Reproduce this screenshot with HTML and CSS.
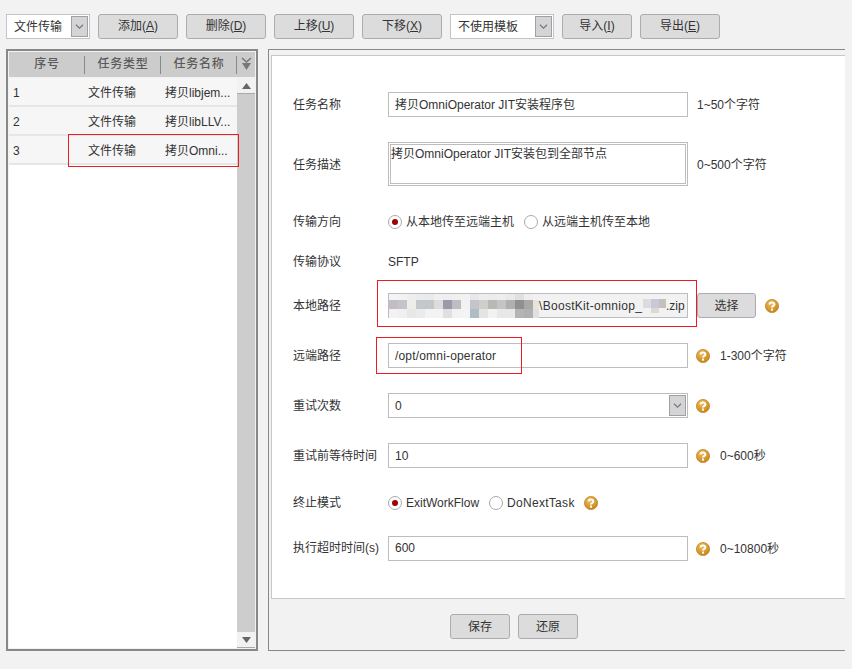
FILE: index.html
```html
<!DOCTYPE html>
<html lang="zh-CN">
<head>
<meta charset="utf-8">
<title>文件传输</title>
<link rel="stylesheet" href="styles.css">
</head>
<body>
<svg class="defs" width="0" height="0" aria-hidden="true">
  <defs>
    <radialGradient id="gold" cx="40%" cy="30%" r="75%">
      <stop offset="0" stop-color="#eebb58"/>
      <stop offset="1" stop-color="#c4851a"/>
    </radialGradient>
    <symbol id="help" viewBox="0 0 14 14">
      <circle cx="7" cy="7" r="6.6" fill="url(#gold)" stroke="#c58a2a" stroke-width="0.8"/>
      <path d="M4.6 5.4 C4.6 2.9 9.4 2.9 9.4 5.4 C9.4 6.9 7 6.8 7 8.6" fill="none" stroke="#fff" stroke-width="2"/>
      <rect x="6" y="9.6" width="2" height="2" fill="#fff"/>
    </symbol>
    <symbol id="chev" viewBox="0 0 17 21">
      <path d="M4.5 8.5 L8.5 12.5 L12.5 8.5" fill="none" stroke="#777" stroke-width="1.3"/>
    </symbol>
  </defs>
</svg>

<div class="toolbar">
  <div class="select select-type"><span>文件传输</span><span class="select-arrow"><svg width="15" height="19"><use href="#chev"/></svg></span></div>
  <div class="btn btn-tool">添加(<u>A</u>)</div>
  <div class="btn btn-tool">删除(<u>D</u>)</div>
  <div class="btn btn-tool">上移(<u>U</u>)</div>
  <div class="btn btn-tool">下移(<u>X</u>)</div>
  <div class="select select-tpl"><span>不使用模板</span><span class="select-arrow"><svg width="15" height="19"><use href="#chev"/></svg></span></div>
  <div class="btn btn-import">导入(<u>I</u>)</div>
  <div class="btn btn-tool">导出(<u>E</u>)</div>
</div>

<div class="main">
  <section class="list-panel">
    <div class="list-head">
      <div class="head-cell">序号</div>
      <div class="head-cell">任务类型</div>
      <div class="head-cell">任务名称</div>
      <div class="head-more">
        <svg width="11" height="15" viewBox="0 0 11 15">
          <path d="M1 1 L5.5 5 L10 1" fill="none" stroke="#777" stroke-width="1.6"/>
          <path d="M1 6 L10 6 L5.5 13 Z" fill="#777"/>
        </svg>
      </div>
    </div>
    <div class="list-body">
      <div class="rows">
        <div class="row"><span>1</span><span>文件传输</span><span>拷贝libjem...</span></div>
        <div class="row"><span>2</span><span>文件传输</span><span>拷贝libLLV...</span></div>
        <div class="row"><span>3</span><span>文件传输</span><span>拷贝Omni...</span></div>
      </div>
      <div class="scrollbar">
        <div class="scroll-btn scroll-up"><svg width="9" height="6"><path d="M4.5 0 L9 6 L0 6 Z" fill="#666"/></svg></div>
        <div class="scroll-track"></div>
        <div class="scroll-btn scroll-down"><svg width="9" height="6"><path d="M0 0 L9 0 L4.5 6 Z" fill="#666"/></svg></div>
      </div>
    </div>
  </section>

  <section class="detail-panel">
    <div class="form">
      <div class="label">任务名称</div>
      <div class="control"><div class="field">拷贝OmniOperator JIT安装程序包</div><span class="hint">1~50个字符</span></div>

      <div class="label label-down">任务描述</div>
      <div class="control"><div class="textarea"><div class="textarea-inner">拷贝OmniOperator JIT安装包到全部节点</div></div><span class="hint hint-down">0~500个字符</span></div>

      <div class="label">传输方向</div>
      <div class="control radios">
        <span class="radio on"></span><span class="radio-text radio-text-a">从本地传至远端主机</span>
        <span class="radio"></span><span class="radio-text">从远端主机传至本地</span>
      </div>

      <div class="label">传输协议</div>
      <div class="control"><span>SFTP</span></div>

      <div class="label">本地路径</div>
      <div class="control">
        <div class="field field-path">
          <svg class="mosaic" width="150" height="24" shape-rendering="crispEdges">
            <g>
              <rect x="0" y="0" width="9" height="6" fill="#f4f4f4"/><rect x="9" y="0" width="9" height="6" fill="#f2f2f2"/><rect x="18" y="0" width="9" height="6" fill="#eeeeee"/><rect x="27" y="0" width="9" height="6" fill="#ececec"/><rect x="36" y="0" width="9" height="6" fill="#eaeaea"/><rect x="45" y="0" width="9" height="6" fill="#f0f0f0"/><rect x="54" y="0" width="9" height="6" fill="#efefef"/><rect x="63" y="0" width="9" height="6" fill="#f0f0f0"/><rect x="72" y="0" width="9" height="6" fill="#f2f2f2"/><rect x="81" y="0" width="9" height="6" fill="#e8e8e8"/><rect x="90" y="0" width="9" height="6" fill="#eeeeee"/><rect x="99" y="0" width="9" height="6" fill="#ececec"/><rect x="108" y="0" width="9" height="6" fill="#eeeeee"/><rect x="117" y="0" width="9" height="6" fill="#eaeaea"/><rect x="126" y="0" width="9" height="6" fill="#e0e0e0"/><rect x="135" y="0" width="9" height="6" fill="#eeeeee"/><rect x="144" y="0" width="6" height="6" fill="#f2f2f2"/>
              <rect x="0" y="6" width="9" height="9" fill="#c4bcc4"/><rect x="9" y="6" width="9" height="9" fill="#c2c4c8"/><rect x="18" y="6" width="9" height="9" fill="#ebeee8"/><rect x="27" y="6" width="9" height="9" fill="#c4c8cc"/><rect x="36" y="6" width="9" height="9" fill="#c0c8cc"/><rect x="45" y="6" width="9" height="9" fill="#dcdcdc"/><rect x="54" y="6" width="9" height="9" fill="#9a9aa8"/><rect x="63" y="6" width="9" height="9" fill="#c0bcc4"/><rect x="72" y="6" width="9" height="9" fill="#f2f2f2"/><rect x="81" y="6" width="9" height="9" fill="#c4c4cc"/><rect x="90" y="6" width="9" height="9" fill="#d0cec8"/><rect x="99" y="6" width="9" height="9" fill="#b8b8b8"/><rect x="108" y="6" width="9" height="9" fill="#c4c4c4"/><rect x="117" y="6" width="9" height="9" fill="#b0b0b0"/><rect x="126" y="6" width="9" height="9" fill="#909090"/><rect x="135" y="6" width="9" height="9" fill="#a8a8a8"/><rect x="144" y="6" width="6" height="9" fill="#e8e4d8"/>
              <rect x="0" y="15" width="9" height="9" fill="#f2f2f2"/><rect x="9" y="15" width="9" height="9" fill="#f0f0f0"/><rect x="18" y="15" width="9" height="9" fill="#e8e8e8"/><rect x="27" y="15" width="9" height="9" fill="#ebebeb"/><rect x="36" y="15" width="9" height="9" fill="#f3f3f3"/><rect x="45" y="15" width="9" height="9" fill="#f3f3f3"/><rect x="54" y="15" width="9" height="9" fill="#e0e0e0"/><rect x="63" y="15" width="9" height="9" fill="#f2f2f2"/><rect x="72" y="15" width="9" height="9" fill="#f4f4f4"/><rect x="81" y="15" width="9" height="9" fill="#b0bcc4"/><rect x="90" y="15" width="9" height="9" fill="#e4e4e4"/><rect x="99" y="15" width="9" height="9" fill="#f2f2f2"/><rect x="108" y="15" width="9" height="9" fill="#e8e8e8"/><rect x="117" y="15" width="9" height="9" fill="#e8e8e8"/><rect x="126" y="15" width="9" height="9" fill="#b4b4b4"/><rect x="135" y="15" width="9" height="9" fill="#b0b0b0"/><rect x="144" y="15" width="6" height="9" fill="#e0e0e0"/>
            </g>
          </svg>
          <span class="path-text">\BoostKit-omniop_</span>
          <svg class="mosaic-small" width="23" height="14" shape-rendering="crispEdges">
            <rect x="0" y="0" width="8" height="9" fill="#dcdce0"/><rect x="8" y="0" width="8" height="9" fill="#c8c8d8"/><rect x="16" y="0" width="7" height="9" fill="#c4c0bc"/>
            <rect x="8" y="9" width="8" height="5" fill="#dcd8d4"/>
          </svg>
          <span>.zip</span>
        </div>
        <div class="btn btn-choose">选择</div>
        <svg class="help help-after-btn" width="14" height="14"><use href="#help"/></svg>
      </div>

      <div class="label">远端路径</div>
      <div class="control"><div class="field field-spaced">/opt/omni-operator</div><svg class="help" width="14" height="14"><use href="#help"/></svg><span class="hint-after-help">1-300个字符</span></div>

      <div class="label">重试次数</div>
      <div class="control"><div class="field field-select"><span>0</span><span class="select-arrow"><svg width="15" height="19"><use href="#chev"/></svg></span></div><svg class="help" width="14" height="14"><use href="#help"/></svg></div>

      <div class="label">重试前等待时间</div>
      <div class="control"><div class="field">10</div><svg class="help" width="14" height="14"><use href="#help"/></svg><span class="hint-after-help">0~600秒</span></div>

      <div class="label">终止模式</div>
      <div class="control radios">
        <span class="radio on"></span><span class="radio-text radio-text-b">ExitWorkFlow</span>
        <span class="radio"></span><span class="radio-text radio-text-c">DoNextTask</span>
        <svg class="help" width="14" height="14"><use href="#help"/></svg>
      </div>

      <div class="label label-up">执行超时时间(s)</div>
      <div class="control"><div class="field field-up">600</div><svg class="help" width="14" height="14"><use href="#help"/></svg><span class="hint-after-help">0~10800秒</span></div>
    </div>
    <div class="actions">
      <div class="btn btn-action">保存</div>
      <div class="btn btn-action">还原</div>
    </div>
  </section>
</div>

<div class="mark mark-row"></div>
<div class="mark mark-local"></div>
<div class="mark mark-remote"></div>
</body>
</html>
```

FILE: styles.css
```css
* { box-sizing: border-box; }

html, body { height: 100%; }

body {
  margin: 0;
  padding: 14px 7px 0 6px;
  position: relative;
  overflow: hidden;
  background: #f2f2f2;
  color: #333;
  font: 12px/16px "Liberation Sans", "Noto Sans CJK SC", sans-serif;
}

.defs { position: absolute; }

.toolbar {
  display: flex;
  gap: 8px;
  height: 25px;
}

.select {
  display: flex;
  align-items: center;
  justify-content: space-between;
  padding: 0 1px 0 7px;
  border: 1px solid #c4c4c8;
  background: #fff;
}
.select-type { width: 84px; }
.select-tpl { width: 104px; }

.select-arrow {
  display: block;
  flex: none;
  width: 17px;
  height: 21px;
  border: 1px solid #a0a0a0;
  background: #d4d4d6;
}
.select-arrow svg { display: block; }

.btn {
  display: flex;
  align-items: center;
  justify-content: center;
  height: 25px;
  border: 1px solid #acacb0;
  border-radius: 3px;
  background: #dcdcdc;
  color: #333;
}
.btn-tool { width: 80px; padding-bottom: 2px; }
.btn-import { width: 70px; padding-bottom: 2px; }
.btn-choose { width: 59px; margin-left: 9px; }
.btn-action { width: 60px; }

.main {
  display: flex;
  gap: 10px;
  height: 602px;
  margin-top: 10px;
}

.list-panel {
  display: flex;
  flex-direction: column;
  flex: none;
  width: 252px;
  padding: 1px;
  border: 2px solid #888;
}

.list-head {
  display: grid;
  grid-template-columns: 76px 76px 76px 18px;
  flex: none;
  height: 25px;
  background: #cccccc;
}
.head-cell {
  position: relative;
  display: flex;
  align-items: center;
  justify-content: center;
  padding-bottom: 2px;
  color: #5a5a5a;
  font-weight: 500;
  letter-spacing: 0.8px;
}
.head-cell::after {
  content: "";
  position: absolute;
  top: 4px;
  right: 0;
  bottom: 3px;
  width: 1px;
  background: #888;
}
.head-more {
  display: flex;
  align-items: center;
  justify-content: center;
}
.head-more svg { display: block; }

.list-body {
  display: flex;
  flex: 1;
  min-height: 0;
  margin-top: 1px;
  background: #fff;
}
.rows { flex: 1; }
.row {
  display: grid;
  grid-template-columns: 75px 77px 1fr;
  align-items: center;
  height: 29px;
  padding: 2px 0 0 4px;
  background: #f6f6f6;
  border-bottom: 2px solid #e6e6e6;
}

.scrollbar {
  display: flex;
  flex-direction: column;
  flex: none;
  width: 18px;
}
.scroll-btn {
  display: flex;
  align-items: center;
  justify-content: center;
  flex: none;
  height: 16px;
  background: #f2f2f2;
}
.scroll-up { border-bottom: 1px solid #aaa; }
.scroll-down { border-bottom: 1px solid #aaa; }
.scroll-track { flex: 1; background: #cdcdcd; }

.detail-panel {
  display: flex;
  flex-direction: column;
  width: 577px;
  padding: 5px 0 0 2px;
  border: 1px solid #888;
  border-right: 0;
}

.form {
  display: grid;
  grid-template-columns: 95px 1fr;
  grid-template-rows: 49px 70px 45px 35px 53px 47px 53px 47px 47px 45px;
  align-content: start;
  flex: none;
  height: 544px;
  padding: 24px 0 0 21px;
  border: 1px solid #c8c8c8;
  border-right: 0;
  background: #fff;
}
.label { align-self: center; white-space: nowrap; }
.label-down { padding-top: 2px; }
.label-up { padding-bottom: 2px; }
.control { display: flex; align-items: center; }

.field {
  display: flex;
  align-items: center;
  flex: none;
  width: 300px;
  height: 25px;
  padding-left: 6px;
  border: 1px solid #bdbdc0;
  background: #fff;
}
.field-up { padding-bottom: 2px; }
.field-spaced { letter-spacing: 0.18px; }
.field-path {
  padding: 0 2px 0 0;
  background: #f2f2f2;
  white-space: nowrap;
}
.mosaic { display: block; flex: none; }
.mosaic-small { display: block; flex: none; }
.path-text { flex: none; width: 104px; letter-spacing: 0.3px; }
.field-select { justify-content: space-between; padding-right: 1px; }

.textarea {
  flex: none;
  width: 300px;
  height: 44px;
  padding: 1px;
  border: 1px solid #bdbdc0;
}
.textarea-inner {
  height: 100%;
  padding: 1px 0 0;
  border: 1px solid #bdbdc0;
}

.hint { margin-left: 9px; }
.hint-down { padding-top: 2px; }
.hint-after-help { margin-left: 10px; }

.help { display: block; flex: none; margin-left: 8px; }
.help-after-btn { margin-left: 9px; }

.radio {
  position: relative;
  flex: none;
  width: 14px;
  height: 14px;
  border: 1px solid #aaa;
  border-radius: 50%;
  background: #fff;
}
.radio.on::after {
  content: "";
  position: absolute;
  top: 3px;
  left: 3px;
  width: 6px;
  height: 6px;
  border-radius: 50%;
  background: #a00000;
}
.radio-text { margin-left: 4px; white-space: nowrap; }
.radio-text-a { width: 118px; flex: none; }
.radio-text-b { width: 83px; flex: none; }
.radio-text-c { width: 69px; flex: none; letter-spacing: 0.3px; }

.actions {
  display: flex;
  gap: 8px;
  padding: 15px 0 0 179px;
}

.mark {
  position: absolute;
  border: 1px solid #ed1c24;
  pointer-events: none;
}
.mark-row { left: 68px; top: 134px; width: 171px; height: 33px; }
.mark-local { left: 377px; top: 280px; width: 320px; height: 47px; }
.mark-remote { left: 376px; top: 337px; width: 146px; height: 37px; }
```
